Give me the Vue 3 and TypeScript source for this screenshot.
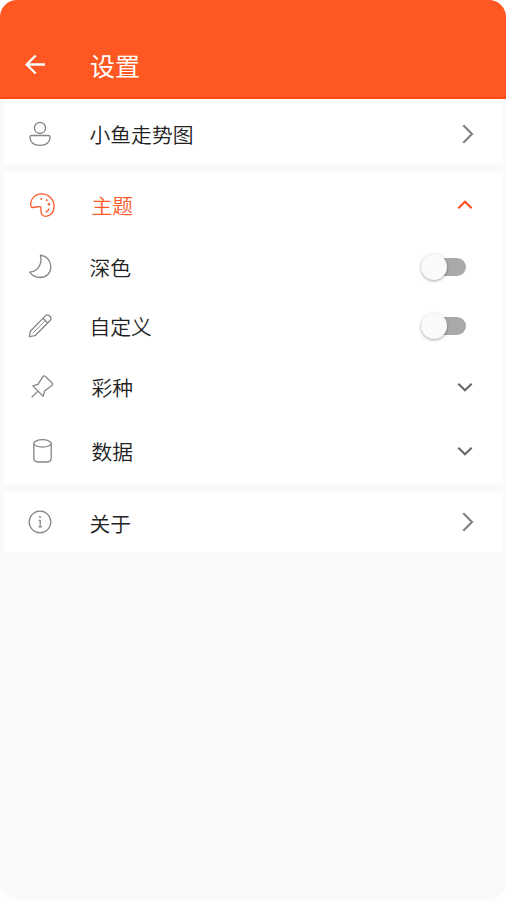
<script setup lang="ts">
import { ref } from 'vue'

type IconName = 'user' | 'palette' | 'moon' | 'pencil' | 'pin' | 'database' | 'info'
type Trailing = 'right' | 'up' | 'down' | 'switch'

interface Row {
  key: string
  label: string
  icon: IconName
  trailing: Trailing
  active?: boolean
}

const groups: Row[][] = [
  [{ key: 'trend', label: '小鱼走势图', icon: 'user', trailing: 'right' }],
  [
    { key: 'theme', label: '主题', icon: 'palette', trailing: 'up', active: true },
    { key: 'dark', label: '深色', icon: 'moon', trailing: 'switch' },
    { key: 'custom', label: '自定义', icon: 'pencil', trailing: 'switch' },
    { key: 'lottery', label: '彩种', icon: 'pin', trailing: 'down' },
    { key: 'data', label: '数据', icon: 'database', trailing: 'down' },
  ],
  [{ key: 'about', label: '关于', icon: 'info', trailing: 'right' }],
]

const switches = ref<Record<string, boolean>>({ dark: false, custom: false })

function activate(row: Row) {
  if (row.trailing === 'switch') switches.value[row.key] = !switches.value[row.key]
}
</script>

<template>
  <div class="screen">
    <header class="bar">
      <svg class="back" viewBox="0 0 24 24">
        <path d="M21 11.500H3M11.700 2.500L2.700 11.500L11.700 20.500" />
      </svg>
      <h1 class="title">设置</h1>
    </header>
    <main class="groups">
      <section v-for="(group, i) in groups" :key="i" class="card">
        <div
          v-for="row in group"
          :key="row.key"
          :class="['row', `row-${row.key}`, { active: row.active }]"
          @click="activate(row)"
        >
          <svg class="icon" viewBox="0 0 32 32">
            <template v-if="row.icon === 'user'">
              <circle cx="16" cy="9.900" r="5.600" />
              <path d="M8 17.500H24Q26.200 17.500 26.100 19.700C25.500 24.800 21.300 27.400 16 27.400S6.500 24.800 5.900 19.700Q5.800 17.500 8 17.500Z" />
            </template>
            <template v-else-if="row.icon === 'palette'">
              <path d="M4.900 17.300C3.500 10.800 8.900 4.900 15.400 4.900C22.500 4.900 28.100 10.200 28.100 17.400C28.100 23.200 24.500 27.300 19.700 27.300C16.900 27.300 15.200 25.500 15 22.500L14.800 17.900C12.500 17 10.300 18.200 7.200 18.500C5.800 18.600 5.100 18.300 4.900 17.300Z" />
              <path d="M22.800 19.500Q22.500 22.300 19.500 23" />
              <circle class="dot" cx="15.300" cy="10" r="1" />
              <circle class="dot" cx="20.700" cy="11.300" r="1" />
              <circle class="dot" cx="23" cy="15.200" r="1.300" />
            </template>
            <template v-else-if="row.icon === 'moon'">
              <path d="M16.400 4.200C22.800 5 26.800 9.600 26.800 15.700C26.800 22.200 22.400 26.500 16.300 26.500C11.700 26.500 8 24.500 5.700 21.200C12.400 20.800 18.900 14.600 16.400 4.200Z" />
            </template>
            <template v-else-if="row.icon === 'pencil'">
              <path d="M5.300 26.700L6.300 21.300L21.300 5.900C24 3.200 28.800 7.500 26.100 10.500L11 25.700L5.300 26.700ZM18.900 8.300L23.500 12.900" />
              <path class="thin" d="M8.600 23.500L22 9.900" />
            </template>
            <template v-else-if="row.icon === 'pin'">
              <path d="M5.600 26.300L12.100 20.100M6.800 14.900L17.200 25.300L18.600 19.900L25.500 14.700Q27.300 13.700 26.300 12.300L19.200 5.200Q17.600 4.100 16.700 5.900L12 13.300L6.800 14.900Z" />
            </template>
            <template v-else-if="row.icon === 'database'">
              <ellipse cx="16.500" cy="8.400" rx="8.700" ry="3.700" />
              <path d="M7.800 8.400V22.800Q7.800 27 12 27H21Q25.200 27 25.200 22.800V8.400" />
            </template>
            <template v-else>
              <circle cx="16" cy="16" r="10.800" />
              <path d="M14.700 14.300H16.200V20.800M14.500 20.800H17.900" />
              <circle class="dot" cx="16" cy="11" r="1" />
            </template>
          </svg>
          <span class="label">{{ row.label }}</span>
          <span
            v-if="row.trailing === 'switch'"
            role="switch"
            :aria-checked="switches[row.key]"
            :class="['switch', { on: switches[row.key] }]"
          >
            <span class="thumb"></span>
          </span>
          <svg v-else :class="['arrow', row.trailing]" viewBox="0 0 20 20">
            <path v-if="row.trailing === 'right'" d="M6.300 1.300L15 10L6.300 18.700" />
            <path v-else-if="row.trailing === 'up'" d="M3.300 13.300L10 6.800L16.700 13.300" />
            <path v-else d="M3.300 6.800L10 13.300L16.700 6.800" />
          </svg>
        </div>
      </section>
    </main>
  </div>
</template>

<style>
body {
  margin: 0;
  background: #fff;
}
</style>

<style scoped>
.screen {
  box-sizing: border-box;
  width: 506px;
  height: 900px;
  overflow: hidden;
  border-radius: 17px;
  background: #fafafa;
  font-family: 'Noto Sans CJK SC', 'Noto Sans', sans-serif;
}
.bar {
  box-sizing: border-box;
  display: flex;
  align-items: center;
  height: 99px;
  padding: 33px 24px 0;
  background: #ff5722;
  border-bottom: 2px solid #f54a16;
}
.back {
  width: 24px;
  height: 24px;
  fill: none;
  stroke: #fff;
  stroke-width: 2.4;
}
.title {
  margin: 0 0 0 42px;
  color: #fff;
  font-size: 25px;
  font-weight: 400;
  line-height: 36px;
}
.groups {
  display: flex;
  flex-direction: column;
  gap: 8px;
  padding: 0 3px 0 4px;
}
.card {
  background: #fff;
}
.row {
  box-sizing: border-box;
  display: flex;
  align-items: center;
  height: 60px;
  padding: 0 28px 0 20px;
  color: #222;
}
.row-trend {
  height: 65px;
  padding-top: 4px;
}
.row-theme,
.row-data {
  height: 66px;
}
.row-dark {
  height: 58px;
}
.row-lottery {
  height: 62px;
}
.row-theme,
.row-lottery,
.row-data {
  padding-left: 22px;
}
.active {
  color: #ff5a2c;
}
.icon {
  flex: none;
  width: 32px;
  height: 32px;
  fill: none;
  stroke: #858585;
  stroke-width: 1.3;
  stroke-linejoin: round;
}
.thin {
  stroke-width: 0.9;
}
.dot {
  fill: #858585;
  stroke: none;
}
.active .icon {
  stroke: #ff5a2c;
}
.active .dot {
  fill: #ff5a2c;
}
.label {
  flex: 1;
  margin-left: 33.5px;
  font-size: 20.8px;
  font-weight: 350;
  line-height: 30px;
}
.row-about .label {
  padding-top: 2px;
}
.arrow {
  flex: none;
  width: 20px;
  height: 20px;
  fill: none;
  stroke: #666;
  stroke-width: 2.1;
}
.arrow.right {
  margin-right: -2px;
  stroke: #808080;
}
.active .arrow {
  stroke: #ff4d1c;
}
.switch {
  display: flex;
  align-items: center;
  box-sizing: border-box;
  width: 42px;
  height: 18px;
  margin-right: 9px;
  border-radius: 9px;
  background: #a9a9a9;
}
.thumb {
  flex: none;
  width: 26px;
  height: 26px;
  margin-left: -3px;
  border-radius: 50%;
  background: #fafafa;
  box-shadow: 0 1px 3px rgba(0, 0, 0, 0.35);
}
.switch.on {
  background: #ffab91;
}
.switch.on .thumb {
  margin-left: 19px;
  background: #ff5722;
}
</style>
